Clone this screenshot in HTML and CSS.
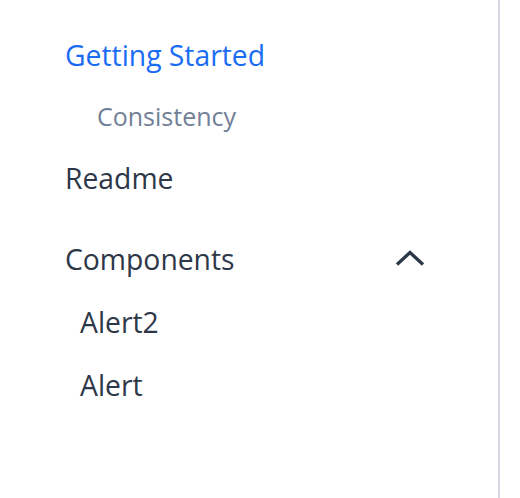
FILE: index.html
```html
<!DOCTYPE html>
<html>
<head>
<meta charset="utf-8">
<link rel="stylesheet" href="styles.css">
</head>
<body>
<nav class="sidebar">
  <a class="item active">Getting Started</a>
  <a class="item sub">Consistency</a>
  <a class="item readme">Readme</a>
  <div class="group">
    <span>Components</span>
    <svg class="chev" width="30" height="16" viewBox="0 0 30 16"><path d="M2 14.5 L15 2.5 L28 14.5" fill="none" stroke="#2d3748" stroke-width="3.3"/></svg>
  </div>
  <a class="item child">Alert2</a>
  <a class="item child">Alert</a>
</nav>
</body>
</html>
```
FILE: styles.css
```css
html, body { margin: 0; padding: 0; background: #fff; }
.sidebar {
  box-sizing: border-box;
  width: 500px;
  height: 498px;
  border-right: 2px solid #d6d8e6;
  padding: 35px 73px 0 65px;
  font-family: "Open Sans", sans-serif;
  display: flex;
  flex-direction: column;
}
.item {
  display: block;
  font-size: 28.3px;
  line-height: 40px;
  color: #2d3748;
}
.active { color: #1a6cf5; }
.sub { font-size: 25px; color: #718096; padding-left: 32px; margin-top: 21px; }
.readme { margin-top: 21.5px; }
.group { display: flex; justify-content: space-between; align-items: center; font-size: 28.3px; line-height: 40px; color: #2d3748; margin-top: 41px; }
.chev { margin-bottom: 2px; }
.child { padding-left: 15px; margin-top: 23px; }
```
